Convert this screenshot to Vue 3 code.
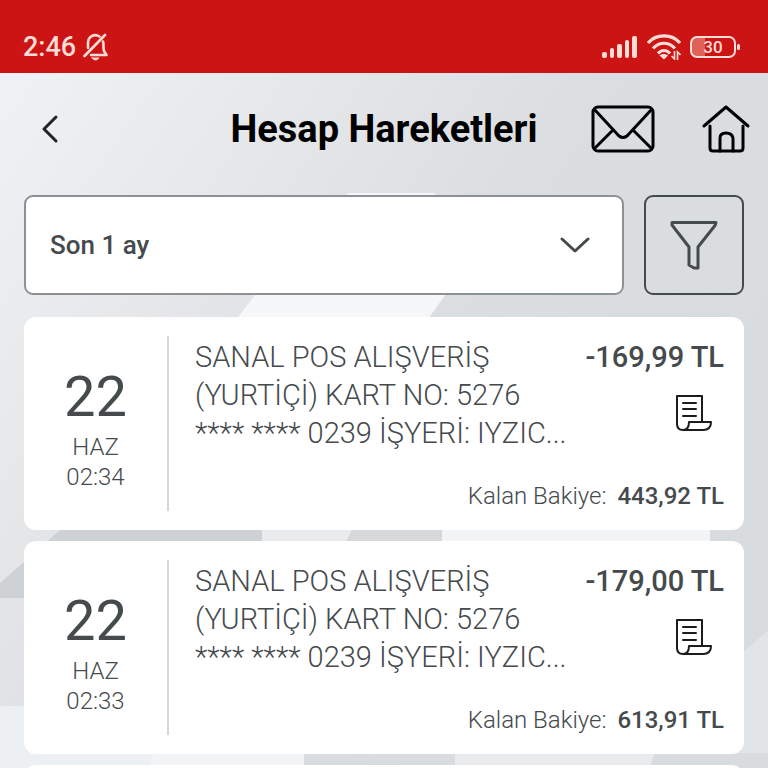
<script setup>
import { ref } from "vue";

const period = ref("Son 1 ay");

const movements = [
  {
    day: "22", month: "HAZ", time: "02:34",
    lines: ["SANAL POS ALIŞVERİŞ", "(YURTİÇİ) KART NO: 5276", "**** **** 0239 İŞYERİ: IYZIC..."],
    amount: "-169,99 TL",
    balance: "443,92 TL"
  },
  {
    day: "22", month: "HAZ", time: "02:33",
    lines: ["SANAL POS ALIŞVERİŞ", "(YURTİÇİ) KART NO: 5276", "**** **** 0239 İŞYERİ: IYZIC..."],
    amount: "-179,00 TL",
    balance: "613,91 TL"
  }
];
</script>

<template>
  <div class="page">
    <svg class="backdrop" viewBox="0 0 768 768" preserveAspectRatio="none" aria-hidden="true">
      <path d="M348 193h88l-10 12h-88z" fill="#f3f5f6" />
      <path d="M256 294h190l-130 180h-200z" fill="#f6f7f9" />
      <path d="M0 583L60 530h205v68H0z" fill="#cfd2d4" />
      <path d="M262 530h90l-6 12h-84z" fill="#e9ebed" />
      <path d="M352 530h90v12h-96z" fill="#d6d8da" />
      <path d="M442 530h268v12H442z" fill="#f3f4f6" />
      <path d="M768 631v137H650V730z" fill="#e2e5e7" />
      <path d="M0 706h190l-40 62H0z" fill="#edf0f2" />
      <path d="M154 753h150v15H149z" fill="#f3f4f6" />
      <path d="M455 753h200l-6 15H455z" fill="#e9ebed" />
      <path d="M655 753h113v15H649z" fill="#d9dcdf" />
    </svg>

    <div class="status">
      <div class="status-group">
        <span class="clock">2:46</span>
        <svg width="26" height="28" viewBox="0 0 26 28" fill="none" stroke="currentColor" stroke-width="2.600" stroke-linecap="round" stroke-linejoin="round">
          <path d="M16.500 3.500C11 0 5 4 5 10v5M20 8.500c1 3 0 7 1 9.500l2.500 4H8" />
          <path d="M1.500 23L22 2" />
          <path d="M9 25h7c-2 2.600-5 2.600-7 0z" fill="currentColor" stroke-width="1" />
        </svg>
      </div>
      <div class="status-group right">
        <svg width="36" height="24" viewBox="0 0 36 24" fill="currentColor">
          <rect x="0" y="17" width="5" height="6" rx="2" />
          <rect x="8" y="13" width="4" height="10" rx="2" />
          <rect x="15" y="9" width="5" height="14" rx="2" />
          <rect x="23" y="5" width="4" height="18" rx="2" />
          <rect x="30" y="1" width="5" height="22" rx="2" />
        </svg>
        <svg width="34" height="26" viewBox="0 0 34 26" fill="none" stroke="currentColor" stroke-width="3.200">
          <path d="M1 9C9-.5 25-.5 33 9M6 14.500c6-7 16-7 22 0M11 19.500c3.500-4 8.500-4 12 0" />
          <path d="M12.500 21.500c2.500-2 6-2 8.500 0L17 25.500z" fill="currentColor" stroke="none" />
          <path d="M27.500 17v8l-3-3M30.500 26v-8l3 3" stroke-width="1.600" />
        </svg>
        <div class="battery">30</div>
      </div>
    </div>

    <header class="header">
      <button class="icon-btn back" aria-label="Geri">
        <svg width="20" height="32" viewBox="0 0 20 32" fill="none" stroke="#222" stroke-width="3" stroke-linecap="round" stroke-linejoin="round">
          <path d="M16 4L4 16l12 12" />
        </svg>
      </button>
      <h1>Hesap Hareketleri</h1>
      <div class="header-actions">
        <button class="icon-btn" aria-label="Mesajlar">
          <svg width="64" height="48" viewBox="0 0 64 48" fill="none" stroke="#000" stroke-width="3" stroke-linejoin="round">
            <rect x="2" y="2" width="60" height="44" rx="5" />
            <path d="M3 4l25 27q4 3 8 0L61 4M3 44l19-19M61 44L42 25" />
          </svg>
        </button>
        <button class="icon-btn" aria-label="Ana sayfa">
          <svg width="48" height="48" viewBox="0 0 48 48" fill="none" stroke="#000" stroke-width="3" stroke-linecap="round" stroke-linejoin="round">
            <path d="M2 21L24 2l22 19" />
            <path d="M8 21v22q0 3 3 3h27q3 0 3-3V21" />
            <path d="M18 46V33q0-5 6-5t7 5v13" />
          </svg>
        </button>
      </div>
    </header>

    <div class="filters">
      <div class="period">
        <select v-model="period" aria-label="Dönem">
          <option>Son 1 ay</option>
        </select>
        <svg class="caret" width="30" height="18" viewBox="0 0 30 18" fill="none" stroke="#454a4d" stroke-width="3" stroke-linecap="round" stroke-linejoin="round">
          <path d="M2 3l13 12L28 3" />
        </svg>
      </div>
      <button class="filter-btn" aria-label="Filtrele">
        <svg width="50" height="50" viewBox="0 0 50 50" fill="none" stroke="#454a4d" stroke-width="3" stroke-linejoin="round">
          <path d="M3 2.500h44l-1 3-17 21.500v21h-4l-5-3V27L3 5z" />
        </svg>
      </button>
    </div>

    <main class="list">
      <article class="card" v-for="(item, index) in movements" :key="index">
        <div class="date">
          <span class="day">{{ item.day }}</span>
          <span>{{ item.month }}</span>
          <span>{{ item.time }}</span>
        </div>
        <div class="body">
          <div class="top">
            <div class="desc">
              <div v-for="line in item.lines" :key="line">{{ line }}</div>
            </div>
            <div class="side">
              <strong class="amount">{{ item.amount }}</strong>
              <button class="icon-btn receipt" aria-label="Dekont">
                <svg width="38" height="38" viewBox="0 0 38 38" fill="none" stroke="#1c1c1c" stroke-width="2" stroke-linejoin="round" stroke-linecap="round">
                  <path d="M27 28V2H2v28q0 6 6 6h20q8 0 8-8H14q0 8-6 8" />
                  <path d="M8 9h13M8 15h13M8 22h13" />
                </svg>
              </button>
            </div>
          </div>
          <div class="balance">Kalan Bakiye: <strong>{{ item.balance }}</strong></div>
        </div>
      </article>
      <article class="card next"></article>
    </main>
  </div>
</template>

<style>
body {
  margin: 0;
}
</style>

<style scoped>
* {
  box-sizing: border-box;
}

.page {
  position: relative;
  height: 100vh;
  display: flex;
  flex-direction: column;
  overflow: hidden;
  font-family: Roboto, "Liberation Sans", sans-serif;
  color: #454a4d;
  background: linear-gradient(125deg, #eff2f4 5%, #e5e7e9 28%, #dbdee1 50%, #d8dbde 100%);
}

.backdrop {
  position: absolute;
  width: 100%;
  height: 100%;
}

.status {
  position: relative;
  display: flex;
  justify-content: space-between;
  height: 73px;
  flex-shrink: 0;
  padding: 20px 32px 0 23px;
  background: #cc1414;
  color: #ffdcd6;
}

.status-group {
  display: flex;
  align-items: center;
  gap: 7px;
}

.status-group.right {
  gap: 9px;
}

.clock {
  font-size: 27px;
  font-weight: 500;
}

.battery {
  position: relative;
  width: 46px;
  height: 22px;
  border: 2px solid #ffdcd6;
  border-radius: 7px;
  font-size: 17px;
  font-weight: 500;
  line-height: 18px;
  text-align: center;
  background: linear-gradient(90deg, #e0605a 30%, transparent 30%);
}

.battery::after {
  content: "";
  position: absolute;
  right: -6px;
  top: 6px;
  width: 3px;
  height: 6px;
  border-radius: 2px;
  background: #ffdcd6;
}

button {
  cursor: pointer;
}

.icon-btn {
  display: flex;
  padding: 0;
  border: 0;
  background: none;
}

.header {
  position: relative;
  display: grid;
  grid-template-columns: 1fr auto 1fr;
  align-items: center;
  height: 112px;
  flex-shrink: 0;
  padding: 0 18px;
}

.back {
  justify-self: start;
  margin-left: 22px;
}

h1 {
  margin: 0;
  font-size: 38px;
  font-weight: 700;
  color: #000;
}

.header-actions {
  display: flex;
  justify-content: flex-end;
  gap: 47px;
}

.filters {
  position: relative;
  display: flex;
  gap: 20px;
  padding: 10px 24px 22px;
}

.period {
  position: relative;
  flex: 1;
}

select {
  appearance: none;
  width: 100%;
  height: 100px;
  padding: 0 24px;
  border: 2px solid #8d9193;
  border-radius: 9px;
  background: #fff;
  font-family: inherit;
  font-size: 26px;
  font-weight: 500;
  color: #454a4d;
}

.caret {
  position: absolute;
  right: 34px;
  top: 41px;
  pointer-events: none;
}

.filter-btn {
  display: flex;
  align-items: center;
  justify-content: center;
  width: 100px;
  height: 100px;
  padding: 0;
  border: 2px solid #454a4d;
  border-radius: 9px;
  background: none;
}

.list {
  position: relative;
  flex: 1;
  min-height: 0;
  display: flex;
  flex-direction: column;
  gap: 11px;
  padding: 0 24px;
  overflow-y: auto;
  scrollbar-width: none;
}

.card {
  display: flex;
  flex-shrink: 0;
  padding: 19px 20px 19px 0;
  border-radius: 12px;
  background: #fff;
}

.card.next {
  height: 212px;
}

.date {
  display: flex;
  flex-direction: column;
  align-items: center;
  justify-content: center;
  width: 145px;
  flex-shrink: 0;
  padding-top: 6px;
  border-right: 2px solid #d5d8da;
  font-size: 24px;
  font-weight: 300;
  line-height: 30px;
}

.day {
  font-size: 56px;
  font-weight: 400;
  line-height: 70px;
}

.body {
  flex: 1;
  min-width: 0;
  padding: 2px 0 0 26px;
}

.top {
  display: flex;
  justify-content: space-between;
}

.desc {
  font-size: 29px;
  font-weight: 300;
  line-height: 38px;
  white-space: nowrap;
}

.side {
  display: flex;
  flex-direction: column;
  align-items: flex-end;
}

.amount {
  font-size: 29px;
  font-weight: 500;
  line-height: 38px;
  white-space: nowrap;
}

.receipt {
  margin: 18px 11px 0 0;
}

.balance {
  margin-top: 29px;
  font-size: 24px;
  font-weight: 300;
  line-height: 30px;
  text-align: right;
}

.balance strong {
  margin-left: 5px;
  font-weight: 500;
}
</style>
